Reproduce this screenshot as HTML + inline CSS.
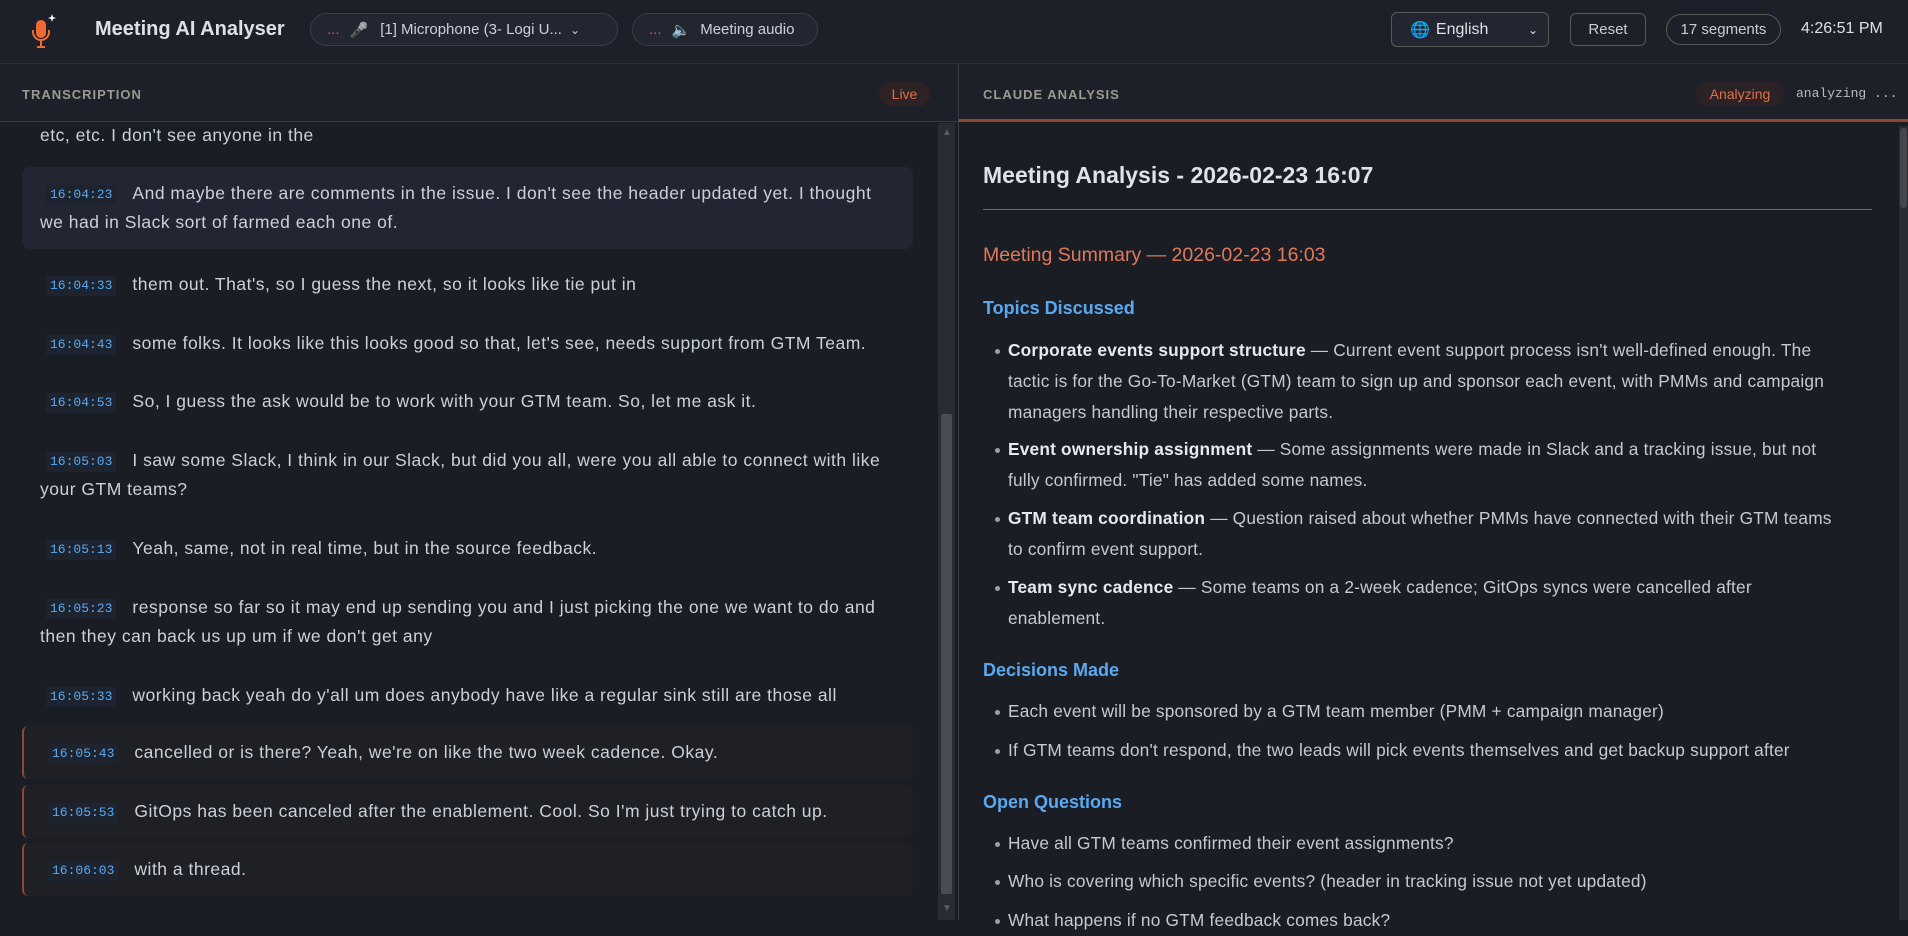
<!DOCTYPE html>
<html><head><meta charset="utf-8"><style>
*{box-sizing:border-box;margin:0;padding:0}
body{width:1908px;height:920px;overflow:hidden;background:#1b1d24;font-family:"Liberation Sans",sans-serif;color:#c9d1d9;position:relative}
.abs{position:absolute}
.hdr{left:0;top:0;width:1908px;height:64px;background:#1e2029;border-bottom:1px solid #2c2f3a}
.pill{border:1px solid #3a3d48;border-radius:17px;background:#232631;height:33px;display:flex;align-items:center;font-size:15px;color:#c9d1d9}
.ph{top:64px;height:58px;background:#1e2029;border-bottom:1px solid #3a3d48}
.lbl{font-size:13px;font-weight:bold;letter-spacing:1px;color:#9a9a92}
.ts{display:inline-block;font-family:"Liberation Mono",monospace;font-size:13px;line-height:20px;letter-spacing:0;color:#5aa9f0;background:#1e2330;padding:0 4px;margin-left:6px;margin-right:16px;vertical-align:1px}
.e{position:absolute;left:22px;width:891px;padding:12px 20px 12px 18px;font-size:17.5px;letter-spacing:0.5px;line-height:29px;color:#c9d1d9;white-space:nowrap}
.hl{background:#232632;border-radius:8px}
.bx{background:#1f1f26;border-left:2px solid #8a4a30;border-radius:6px}
.r{left:983px;width:890px}
.li{position:absolute;left:1008px;width:880px;font-size:17.3px;letter-spacing:0.2px;line-height:31px;color:#c4cad2;white-space:nowrap}
.li:before{content:"";position:absolute;left:-13px;top:14px;width:5px;height:5px;border-radius:50%;background:#9aa0a8}
.li b{color:#e6e9ee}
.h3{position:absolute;left:983px;font-size:18px;font-weight:bold;color:#5aa9f0}
</style></head><body>
<div class="abs hdr"></div>
<svg class="abs" style="left:30px;top:12px" width="30" height="40" viewBox="0 0 30 40"><rect x="6" y="8" width="10" height="18" rx="5" fill="#f06a35"/><path d="M3 18v2a8 8 0 0 0 16 0v-2" stroke="#f06a35" stroke-width="2" fill="none"/><path d="M11 28v6M7 35h8" stroke="#f06a35" stroke-width="2"/><path d="M22 2l1 3 3 1-3 1-1 3-1-3-3-1 3-1z" fill="#fff"/></svg>
<div class="abs" style="left:95px;top:18px;font-size:20px;font-weight:bold;color:#dde1e7">Meeting AI Analyser</div>
<div class="abs pill" style="left:310px;top:13px;width:308px;padding-left:16px"><span style="color:#d05a2a;margin-right:10px">...</span><span style="color:#b8a8c8;margin-right:12px">🎤</span>[1] Microphone (3- Logi U... <span style="margin-left:8px;font-size:12px">⌄</span></div>
<div class="abs pill" style="left:632px;top:13px;width:186px;padding-left:16px"><span style="color:#d05a2a;margin-right:10px">...</span><span style="margin-right:10px">🔈</span>Meeting audio</div>
<div class="abs" style="left:1391px;top:12px;width:158px;height:35px;border:1px solid #5a5a58;border-radius:6px;background:#232631;font-size:16px;display:flex;align-items:center;padding-left:18px;color:#dde1e7"><span style="color:#4aa0e8;margin-right:6px">🌐</span>English<span style="position:absolute;right:10px;font-size:12px">⌄</span></div>
<div class="abs" style="left:1570px;top:13px;width:76px;height:33px;border:1px solid #5a5a58;border-radius:6px;font-size:15px;display:flex;align-items:center;justify-content:center;color:#c9cdd2">Reset</div>
<div class="abs" style="left:1666px;top:14px;width:115px;height:31px;border:1px solid #5a5a58;border-radius:16px;font-size:15px;display:flex;align-items:center;justify-content:center;color:#c9cdd2">17 segments</div>
<div class="abs" style="left:1801px;top:20px;font-size:16px;color:#dde1e7">4:26:51 PM</div>

<div class="abs ph" style="left:0;width:958px"></div>
<div class="abs ph" style="left:959px;width:949px;border-bottom:3px solid #8a4a35"></div>
<div class="abs" style="left:958px;top:64px;width:1px;height:856px;background:#3a3d48"></div>
<div class="abs lbl" style="left:22px;top:87px">TRANSCRIPTION</div>
<div class="abs" style="left:879px;top:82px;width:51px;height:24px;border-radius:12px;background:#2e2224;color:#e0704a;font-size:14px;display:flex;align-items:center;justify-content:center">Live</div>
<div class="abs lbl" style="left:983px;top:87px">CLAUDE ANALYSIS</div>
<div class="abs" style="left:1695px;top:82px;width:90px;height:24px;border-radius:12px;background:#2a2226;color:#e0704a;font-size:14px;display:flex;align-items:center;justify-content:center">Analyzing</div>
<div class="abs" style="left:1796px;top:86px;font-family:'Liberation Mono',monospace;font-size:13px;color:#b8bcc2">analyzing ...</div>

<div class="abs" style="left:0;top:123px;width:938px;height:797px;overflow:hidden">
<div class="e" style="top:-14px">etc, etc. I don't see anyone in the</div>
<div class="e hl" style="top:44px"><span class="ts">16:04:23</span>And maybe there are comments in the issue. I don't see the header updated yet. I thought<br>we had in Slack sort of farmed each one of.</div>
<div class="e" style="top:135px"><span class="ts">16:04:33</span>them out. That's, so I guess the next, so it looks like tie put in</div>
<div class="e" style="top:194px"><span class="ts">16:04:43</span>some folks. It looks like this looks good so that, let's see, needs support from GTM Team.</div>
<div class="e" style="top:252px"><span class="ts">16:04:53</span>So, I guess the ask would be to work with your GTM team. So, let me ask it.</div>
<div class="e" style="top:311px"><span class="ts">16:05:03</span>I saw some Slack, I think in our Slack, but did you all, were you all able to connect with like<br>your GTM teams?</div>
<div class="e" style="top:399px"><span class="ts">16:05:13</span>Yeah, same, not in real time, but in the source feedback.</div>
<div class="e" style="top:458px"><span class="ts">16:05:23</span>response so far so it may end up sending you and I just picking the one we want to do and<br>then they can back us up um if we don't get any</div>
<div class="e" style="top:546px"><span class="ts">16:05:33</span>working back yeah do y'all um does anybody have like a regular sink still are those all</div>
<div class="e bx" style="top:603px"><span class="ts">16:05:43</span>cancelled or is there? Yeah, we're on like the two week cadence. Okay.</div>
<div class="e bx" style="top:662px"><span class="ts">16:05:53</span>GitOps has been canceled after the enablement. Cool. So I'm just trying to catch up.</div>
<div class="e bx" style="top:720px"><span class="ts">16:06:03</span>with a thread.</div>
</div>
<div class="abs" style="left:938px;top:123px;width:17px;height:797px;background:#2a2c33"></div>
<div class="abs" style="left:941px;top:414px;width:11px;height:480px;background:#4a4c52;border-radius:2px"></div>
<div class="abs" style="left:942px;top:127px;color:#5a5c62;font-size:10px">▲</div>
<div class="abs" style="left:942px;top:903px;color:#5a5c62;font-size:10px">▼</div>
<div class="abs" style="left:1899px;top:126px;width:9px;height:794px;background:#2a2c33"></div>
<div class="abs" style="left:1900px;top:128px;width:7px;height:80px;background:#45474d;border-radius:3px"></div>

<div class="abs r" style="top:162px;font-size:23px;font-weight:bold;color:#dde3ea">Meeting Analysis - 2026-02-23 16:07</div>
<div class="abs" style="left:983px;top:209px;width:889px;height:1px;background:#6a6c70"></div>
<div class="abs" style="left:983px;top:244px;font-size:19.5px;color:#e0785a">Meeting Summary — 2026-02-23 16:03</div>
<div class="h3" style="top:298px">Topics Discussed</div>
<div class="li" style="top:335px"><b>Corporate events support structure</b> — Current event support process isn't well-defined enough. The<br>tactic is for the Go-To-Market (GTM) team to sign up and sponsor each event, with PMMs and campaign<br>managers handling their respective parts.</div>
<div class="li" style="top:434px"><b>Event ownership assignment</b> — Some assignments were made in Slack and a tracking issue, but not<br>fully confirmed. "Tie" has added some names.</div>
<div class="li" style="top:503px"><b>GTM team coordination</b> — Question raised about whether PMMs have connected with their GTM teams<br>to confirm event support.</div>
<div class="li" style="top:572px"><b>Team sync cadence</b> — Some teams on a 2-week cadence; GitOps syncs were cancelled after<br>enablement.</div>
<div class="h3" style="top:660px">Decisions Made</div>
<div class="li" style="top:696px">Each event will be sponsored by a GTM team member (PMM + campaign manager)</div>
<div class="li" style="top:735px">If GTM teams don't respond, the two leads will pick events themselves and get backup support after</div>
<div class="h3" style="top:792px">Open Questions</div>
<div class="li" style="top:828px">Have all GTM teams confirmed their event assignments?</div>
<div class="li" style="top:866px">Who is covering which specific events? (header in tracking issue not yet updated)</div>
<div class="li" style="top:905px">What happens if no GTM feedback comes back?</div>
</body></html>
